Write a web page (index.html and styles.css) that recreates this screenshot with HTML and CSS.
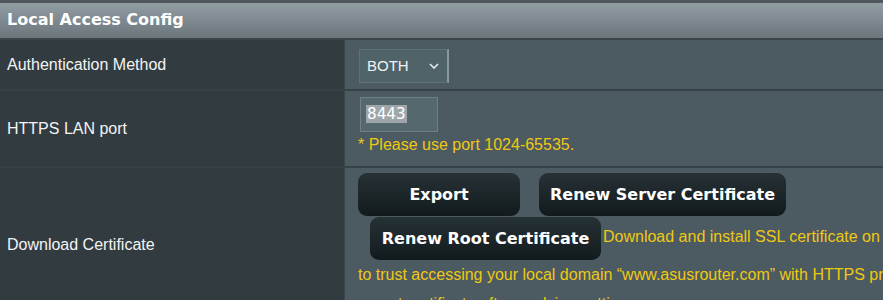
FILE: index.html
```html
<!DOCTYPE html>
<html>
<head>
<meta charset="utf-8">
<link rel="stylesheet" href="styles.css">
</head>
<body>
<div class="page">
<div class="top-line"></div>
<div class="header">Local Access Config</div>
<div class="row row-auth">
  <div class="label">Authentication Method</div>
  <div class="value">
    <div class="select"><span>BOTH</span><svg class="chev" width="10" height="6" viewBox="0 0 10 6"><path d="M1 1 L5 5 L9 1" fill="none" stroke="#e6ebec" stroke-width="1.6"/></svg></div>
  </div>
</div>
<div class="row row-port">
  <div class="label">HTTPS LAN port</div>
  <div class="value">
    <div class="input"><span class="sel">8443</span></div>
    <div class="hint">* Please use port 1024-65535.</div>
  </div>
</div>
<div class="row row-cert">
  <div class="label">Download Certificate</div>
  <div class="value cert">
    <span class="btn btn-export">Export</span><span class="btn btn-server">Renew Server Certificate</span><br><span class="btn btn-root">Renew Root Certificate</span><span class="note">Download and install SSL certificate on your browser to trust accessing your local domain “www.asusrouter.com” with HTTPS protocol. To export certificate after applying settings.</span>
  </div>
</div>
</div>
</body>
</html>
```
FILE: styles.css
```css
html, body {
  margin: 0;
  padding: 0;
  background: #4b5b61;
  overflow: hidden;
}
body {
  width: 883px;
  height: 300px;
  font-family: "Liberation Sans", Arial, sans-serif;
}
.page {
  width: 990px;
}
.top-line {
  height: 3px;
  background: #50575d;
}
.header {
  height: 37px;
  box-sizing: border-box;
  border-bottom: 2px solid #3c464a;
  background: linear-gradient(#919da3, #6a767c);
  color: #fff;
  font-family: "DejaVu Sans", Verdana, sans-serif;
  font-weight: bold;
  font-size: 16px;
  line-height: 33px;
  padding-left: 7px;
}
.row {
  display: grid;
  grid-template-columns: 345px 1fr;
  border-bottom: 2px solid #374246;
}
.label {
  background: #323b40;
  border-right: 1px solid #3c474b;
  color: #f2f4f4;
  font-size: 16px;
  padding-left: 7px;
  display: flex;
  align-items: center;
}
.value {
  background: #4b5b61;
  padding-left: 14px;
}
.row-auth { height: 49px; }
.row-auth .value {
  display: flex;
  align-items: center;
  padding-top: 2px;
}
.select {
  width: 90px;
  height: 34px;
  box-sizing: border-box;
  background: #506369;
  border: 1px solid #5f7176;
  border-right: 2px solid #8a999d;
  display: flex;
  align-items: center;
  justify-content: space-between;
  padding: 0 8px 0 7px;
  color: #f0f3f3;
  font-size: 15px;
}
.row-port { height: 75px; }
.row-port .value {
  padding-top: 6px;
  padding-left: 13px;
}
.input {
  width: 78px;
  height: 35px;
  box-sizing: border-box;
  border: 1px solid #6f8085;
  background: #55686e;
  padding: 7px 0 0 5px;
  margin-left: 2px;
}
.sel {
  background: #9ea6a9;
  color: #fff;
  font-family: "DejaVu Sans Mono", monospace;
  font-size: 16px;
  line-height: 18px;
  display: inline-block;
  padding: 0 1px;
}
.hint {
  color: #f0c814;
  font-size: 16px;
  margin-top: 4px;
}
.row-cert {
  height: 154px;
  grid-template-rows: 154px;
  border-bottom: none;
  overflow: hidden;
}
.cert {
  padding-top: 5px;
  padding-left: 13px;
  padding-right: 5px;
  line-height: 29px;
  font-size: 16px;
}
.btn {
  display: inline-block;
  height: 43px;
  line-height: 43px;
  box-sizing: border-box;
  background: linear-gradient(#273236, #121a1d);
  border-radius: 9px;
  color: #fff;
  font-family: "DejaVu Sans", Verdana, sans-serif;
  font-weight: bold;
  font-size: 16px;
  text-align: center;
  vertical-align: middle;
}
.btn-export { width: 162px; }
.btn-server { width: 247px; margin-left: 19px; }
.btn-root { width: 231px; margin-left: 12px; margin-top: 1px; }
.note {
  color: #f0c814;
  font-size: 16px;
  padding-left: 2px;
}
```
